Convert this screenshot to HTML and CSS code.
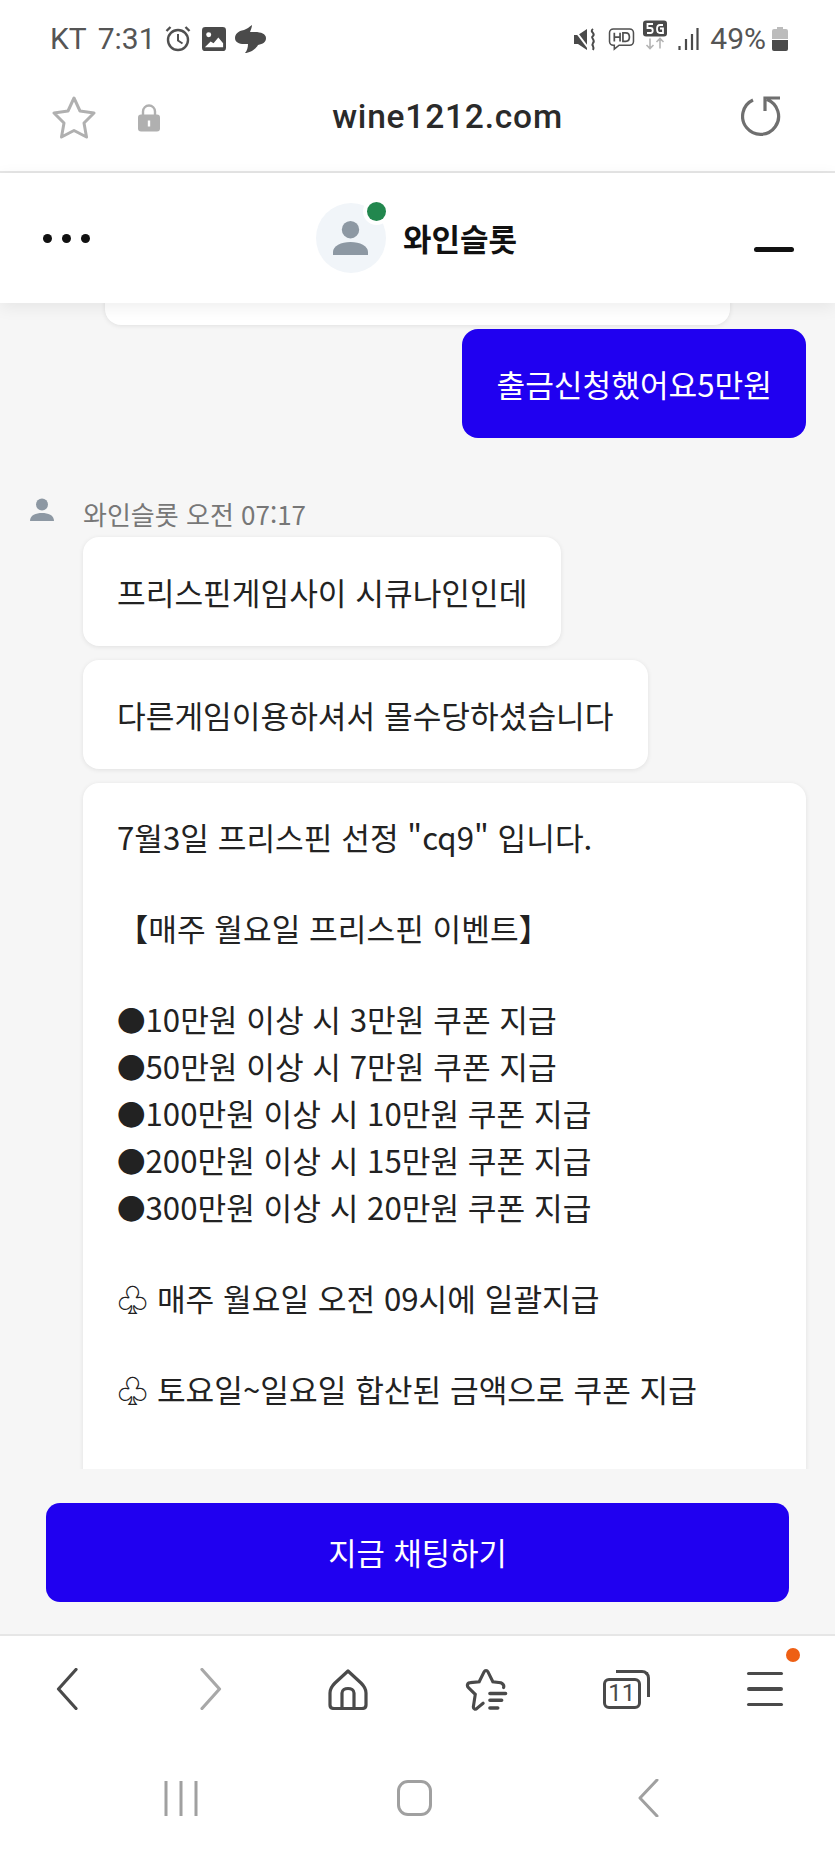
FILE: index.html
```html
<!DOCTYPE html>
<html lang="ko">
<head>
<meta charset="utf-8">
<title>와인슬롯</title>
<link rel="stylesheet" href="styles.css">
</head>
<body>
<div class="phone">
  <div class="status">
    <div class="status-left">
      <span class="status-text">KT</span><span class="status-text">7:31</span>
      <svg class="alarm" width="26" height="26" viewBox="0 0 26 26"><circle cx="13" cy="14" r="10" fill="none" stroke="#505050" stroke-width="2.400"/><path d="M13 8v6.500l4.500 3" fill="none" stroke="#505050" stroke-width="2"/><path d="M1.500 5l4-4M24.500 5l-4-4" stroke="#505050" stroke-width="2.400"/></svg>
      <svg class="pic" width="24" height="24" viewBox="0 0 25 25"><rect width="25" height="25" rx="3.500" fill="#4a4a4a"/><circle cx="7" cy="8" r="2.600" fill="#fff"/><path d="M3 21l6-6 3 2 5-6 5 6v4H3z" fill="#fff"/></svg>
      <svg class="blob" width="31" height="29" viewBox="0 0 31 29"><path d="M17 0C14 2 12 4 9 5 3 6 0 9 0 13c0 4 4 6 9 6h4c0 3-1 7-3 9 5 0 11-4 13-8 5-1 8-3 8-7 0-4-5-6-11-6h-5c1-3 2-5 2-7z" fill="#4a4a4a"/></svg>
    </div>
    <div class="status-right">
      <svg class="mute" width="22" height="23" viewBox="0 0 22 23"><path d="M0 7h4l9-6v21L4 16H0z" fill="#4a4a4a"/><path d="M0 1l15 20" stroke="#fff" stroke-width="2"/><path d="M19 1c-4 3 3 4 0 7-3 2 3 4 0 7-2 3 2 3 0 7" fill="none" stroke="#4a4a4a" stroke-width="2"/></svg>
      <svg class="hd" width="27" height="23" viewBox="0 0 27 24"><path d="M5 1h17a4 4 0 0 1 4 4v9a4 4 0 0 1-4 4H11l-5 4 0-4H5a4 4 0 0 1-4-4V5a4 4 0 0 1 4-4z" fill="none" stroke="#505050" stroke-width="1.600"/><path d="M6 5v9M12 5v9M6 9.500h6M15 5v9h3c5 0 5-9 0-9z" fill="none" stroke="#505050" stroke-width="1.800"/></svg>
      <svg class="fiveg" width="24" height="30" viewBox="0 0 24 29"><rect width="24" height="16" rx="3" fill="#4a4a4a"/><path d="M10 3.500H4.500v4h3c3 0 3 5 0 5h-3.500M20 4.500h-3c-4 0-4 8 0 8h3V8h-3" fill="none" stroke="#fff" stroke-width="1.800"/><path d="M7 18v10M3.500 24.500L7 28l3.500-3.500M17 28V18M13.500 21.500L17 18l3.500 3.500" fill="none" stroke="#b5b5b5" stroke-width="1.600"/></svg>
      <svg class="sig" width="21" height="23" viewBox="0 0 21 23"><path d="M1.500 18v4M8 11v11M14 6v16M19.500 0v22" stroke="#4a4a4a" stroke-width="2.200" fill="none"/></svg>
      <span class="status-text pct">49%</span>
      <svg class="bat" width="16" height="24" viewBox="0 0 16 24"><path d="M5 0h6v2h3a2 2 0 0 1 2 2v8H0V4a2 2 0 0 1 2-2h3z" fill="#bcbcbc"/><path d="M0 13h16v9a2 2 0 0 1-2 2H2a2 2 0 0 1-2-2z" fill="#4a4a4a"/></svg>
    </div>
  </div>

  <div class="urlbar">
    <svg class="star" width="46" height="44" viewBox="0 0 46 44"><path d="M23 3l6 13 14 2-10 10 2.500 14L23 35.500 10.500 42 13 28 3 18l14-2z" fill="none" stroke="#b0b0b0" stroke-width="3" stroke-linejoin="round"/></svg>
    <svg class="lock" width="22" height="29" viewBox="0 0 22 28"><path d="M5 12V8a6 6 0 0 1 12 0v4" fill="none" stroke="#b0b0b0" stroke-width="2.400"/><rect y="11" width="22" height="17" rx="3" fill="#b0b0b0"/><rect x="9.800" y="17" width="2.400" height="6" fill="#fff"/></svg>
    <div class="domain">wine1212.com</div>
    <svg class="reload" width="40" height="40" viewBox="0 0 40 40"><path d="M12 4a18 18 0 1 0 14-.5M24 15V2h15" fill="none" stroke="#6f6f6f" stroke-width="3.200"/></svg>
  </div>

  <header class="chathead">
    <div class="dots"><i></i><i></i><i></i></div>
    <div class="agent">
      <div class="avatar">
        <svg width="35" height="34" viewBox="0 0 35 34"><circle cx="17.500" cy="8.700" r="8.700" fill="#8d98a3"/><path d="M0 34v-3c0-6 8-10 17.500-10S35 25 35 31v3z" fill="#8d98a3"/></svg>
        <span class="online"></span>
      </div>
      <div class="agent-name">와인슬롯</div>
    </div>
    <div class="minimize"></div>
  </header>

  <main class="chat">
    <div class="prev-bubble"></div>
    <div class="row-user"><div class="bubble user">출금신청했어요5만원</div></div>
    <div class="meta">
      <svg width="24" height="24" viewBox="0 0 24 24"><circle cx="12" cy="6.500" r="6" fill="#8d98a3"/><path d="M0 23c0-6 6-8 12-8s12 2 12 8z" fill="#8d98a3"/></svg>
      <span class="meta-text">와인슬롯 오전 07:17</span>
    </div>
    <div class="msgs">
      <div class="bubble">프리스핀게임사이 시큐나인인데</div>
      <div class="bubble">다른게임이용하셔서 몰수당하셨습니다</div>
      <div class="bubble long">
        <p class="para">7월3일 프리스핀 선정 "cq9" 입니다.</p>
        <p class="para">【매주 월요일 프리스핀 이벤트】</p>
        <ul class="tiers">
          <li><span class="dot">●</span>10만원 이상 시 3만원 쿠폰 지급</li>
          <li><span class="dot">●</span>50만원 이상 시 7만원 쿠폰 지급</li>
          <li><span class="dot">●</span>100만원 이상 시 10만원 쿠폰 지급</li>
          <li><span class="dot">●</span>200만원 이상 시 15만원 쿠폰 지급</li>
          <li><span class="dot">●</span>300만원 이상 시 20만원 쿠폰 지급</li>
        </ul>
        <p class="para">♧ 매주 월요일 오전 09시에 일괄지급</p>
        <p class="para">♧ 토요일~일요일 합산된 금액으로 쿠폰 지급</p>
      </div>
    </div>
  </main>

  <div class="compose"><button class="cta">지금 채팅하기</button></div>

  <nav class="browser-nav">
    <svg class="nav-back" width="22" height="42" viewBox="0 0 22 42"><path d="M20 1.500L2.500 21 20 40.500" fill="none" stroke="#4a4a4a" stroke-width="3.200" stroke-linecap="round" stroke-linejoin="round"/></svg>
    <svg class="nav-forward" width="22" height="42" viewBox="0 0 22 42"><path d="M2 1.500L19.500 21 2 40.500" fill="none" stroke="#a8a8a8" stroke-width="3.200" stroke-linecap="round" stroke-linejoin="round"/></svg>
    <svg width="40" height="41" viewBox="0 0 40 41"><path d="M20 2L33 14c3 3 5 6 5 10v12c0 3-2 3.500-4 3.500H6c-2 0-4-.5-4-3.500V24c0-4 2-7 5-10z" fill="none" stroke="#4a4a4a" stroke-width="3.200" stroke-linejoin="round"/><path d="M14 39V24c0-6 12-6 12 0v15" fill="none" stroke="#4a4a4a" stroke-width="3.200"/></svg>
    <svg width="46" height="43" viewBox="0 0 46 44"><path d="M40 20c1-3-1-4-3-5l-8-1L24 4c-1-2-3-2-4 0l-5 10-9 1c-3 0-4 3-2 5l7 7-2 13c0 2 2 3 4 1l6-5" fill="none" stroke="#4a4a4a" stroke-width="3.200" stroke-linecap="round"/><path d="M26 26h16M26 33h12M26 41h8" stroke="#4a4a4a" stroke-width="3.600" stroke-linecap="round"/></svg>
    <div class="tabs">
      <span class="tabs-back"></span>
      <span class="tabs-front">11</span>
    </div>
    <div class="menu"><i></i><i></i><i></i><span class="badge"></span></div>
  </nav>

  <nav class="system-nav">
    <svg width="34" height="35" viewBox="0 0 34 35"><path d="M2 0v35M17 0v35M32 0v35" stroke="#a0a0a0" stroke-width="3"/></svg>
    <span class="home-btn"></span>
    <svg width="22" height="38" viewBox="0 0 22 38"><path d="M20 1L3 19l17 18" fill="none" stroke="#a0a0a0" stroke-width="3" stroke-linecap="round" stroke-linejoin="round"/></svg>
  </nav>
</div>
</body>
</html>
```
FILE: styles.css
```css
* { box-sizing: border-box; }
html, body { margin: 0; padding: 0; }
body {
  width: 835px;
  height: 1856px;
  overflow: hidden;
  background: #fff;
  font-family: "Noto Sans CJK KR", "Noto Sans", sans-serif;
  color: #1b1b1b;
}
.phone {
  width: 835px;
  height: 1856px;
  display: flex;
  flex-direction: column;
}
svg { display: block; flex: none; }

.status {
  height: 62px;
  flex: none;
  display: flex;
  justify-content: space-between;
  padding: 19px 47px 0 50px;
}
.status-left, .status-right { display: flex; align-items: center; height: 40px; }
.status-text { font: 30px/1 Roboto, sans-serif; color: #555; }
.status-left .status-text + .status-text { margin-left: 11px; }
.alarm { margin-left: 9px; }
.pic { margin-left: 11px; }
.blob { margin-left: 9px; }
.hd { margin-left: 12px; }
.fiveg { margin-left: 8px; margin-top: -8px; }
.sig { margin-left: 11px; }
.pct { margin-left: 11px; }
.bat { margin-left: 6px; }

.urlbar {
  height: 111px;
  flex: none;
  border-bottom: 2px solid #e6e6e6;
  display: flex;
  align-items: center;
  padding: 0 54px 0 51px;
}
.lock { margin-left: 41px; margin-top: 2px; }
.domain {
  flex: 1;
  text-align: center;
  font: 500 33.500px/1 Roboto, sans-serif;
  color: #2a2a2a;
  letter-spacing: 0.800px;
  padding-right: 6px;
}
.reload { margin-top: -2px; }

.chathead {
  height: 130px;
  flex: none;
  display: flex;
  align-items: center;
  justify-content: space-between;
  padding: 0 41px 0 43px;
  background: #fff;
  box-shadow: 0 4px 16px rgba(0, 0, 0, .07);
  position: relative;
  z-index: 2;
}
.dots { display: flex; gap: 10px; }
.dots i { width: 9px; height: 9px; border-radius: 50%; background: #111; }
.agent { display: flex; align-items: center; gap: 17px; margin-right: 11px; }
.avatar {
  width: 70px;
  height: 70px;
  border-radius: 50%;
  background: #f1f5f9;
  display: flex;
  align-items: center;
  justify-content: center;
  position: relative;
}
.online {
  position: absolute;
  top: -1px;
  right: 0;
  width: 19px;
  height: 19px;
  border-radius: 50%;
  background: #22874e;
  box-shadow: 0 0 0 4px #fff;
}
.agent-name { font-size: 31px; font-weight: 700; line-height: 40px; color: #111; }
.minimize { width: 40px; height: 5px; border-radius: 3px; background: #111; margin-top: 22px; }

.chat {
  flex: 1;
  min-height: 0;
  overflow: hidden;
  background: #f6f6f6;
  display: flex;
  flex-direction: column;
}
.prev-bubble {
  flex: none;
  height: 60px;
  margin: -38px 105px 4px 105px;
  background: #fff;
  border-radius: 16px;
  box-shadow: 0 1px 5px rgba(0, 0, 0, .09);
}
.row-user { display: flex; justify-content: flex-end; padding-right: 29px; flex: none; }
.bubble {
  flex: none;
  font-size: 31.200px;
  line-height: 47px;
  padding: 31px 34px 31px;
  background: #fff;
  border-radius: 16px;
  box-shadow: 0 1px 5px rgba(0, 0, 0, .09);
  color: #222;
}
.bubble.user { background: #2000f0; color: #fff; box-shadow: none; }
.meta {
  flex: none;
  display: flex;
  align-items: center;
  gap: 29px;
  margin: 56px 0 0 30px;
  height: 40px;
}
.meta svg { margin-top: -8px; }
.meta-text { font-size: 26px; color: #777; line-height: 40px; }
.msgs {
  flex: none;
  display: flex;
  flex-direction: column;
  align-items: flex-start;
  gap: 14px;
  padding: 0 29px 0 83px;
  margin-top: 3px;
}
.bubble.long {
  width: 100%;
  padding-bottom: 80px;
  display: flex;
  flex-direction: column;
  gap: 45px;
}
.para { margin: 0; line-height: 45.600px; }
.tiers { margin: 0; padding: 0; list-style: none; }
.tiers li { height: 47px; line-height: 47px; }
.dot { font-size: 28.500px; line-height: 1; }

.compose {
  flex: none;
  height: 167px;
  background: #f6f6f6;
  border-bottom: 2px solid #e6e6e6;
  padding: 34px 46px 0;
}
.cta {
  display: block;
  width: 100%;
  height: 99px;
  border: 0;
  border-radius: 14px;
  background: #2000f0;
  color: #fff;
  font: 400 30.800px/1 "Noto Sans CJK KR", sans-serif;
}

.browser-nav {
  flex: none;
  height: 106px;
  display: grid;
  grid-template-columns: repeat(6, 1fr);
  justify-items: center;
  align-items: center;
}
.nav-back { margin-right: 5px; }
.nav-forward { margin-left: 4px; }
.tabs { position: relative; width: 47px; height: 39px; }
.tabs-front {
  position: absolute;
  left: 0;
  bottom: 0;
  width: 38px;
  height: 31px;
  border: 3px solid #4a4a4a;
  border-radius: 6px;
  font: 24px/25px Roboto, sans-serif;
  color: #4a4a4a;
  text-align: center;
}
.tabs-back {
  position: absolute;
  right: 0;
  top: 0;
  width: 34px;
  height: 27px;
  border: 3px solid #4a4a4a;
  border-left: 0;
  border-bottom: 0;
  border-radius: 0 8px 0 0;
}
.menu { position: relative; width: 36px; display: flex; flex-direction: column; gap: 12px; }
.menu i { display: block; height: 3.500px; border-radius: 2px; background: #4a4a4a; }
.badge {
  position: absolute;
  top: -24px;
  right: -17px;
  width: 14px;
  height: 14px;
  border-radius: 50%;
  background: #ee5f14;
}

.system-nav {
  flex: none;
  height: 114px;
  display: grid;
  grid-template-columns: repeat(3, 1fr);
  justify-items: center;
  align-items: center;
  padding: 0 70px 2px 64px;
}
.home-btn {
  width: 35px;
  height: 36px;
  border: 3px solid #a0a0a0;
  border-radius: 11px;
}
```
